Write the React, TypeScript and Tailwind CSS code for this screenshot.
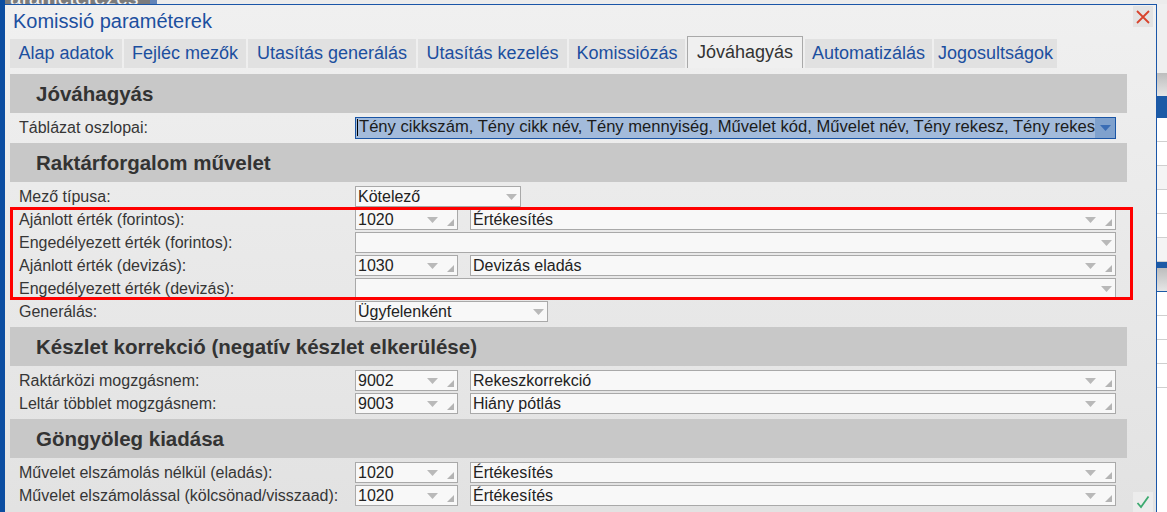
import React from "react";

const tabs = [
  { label: "Alap adatok", w: "w-[112px]" },
  { label: "Fejléc mezők", w: "w-[122px]" },
  { label: "Utasítás generálás", w: "w-[168px]" },
  { label: "Utasítás kezelés", w: "w-[149px]" },
  { label: "Komissiózás", w: "w-[116px]" },
  { label: "Jóváhagyás", w: "w-[116px]", active: true },
  { label: "Automatizálás", w: "w-[127px]" },
  { label: "Jogosultságok", w: "w-[123px]" },
];

function Arrow({ color = "#b9b9b9" }: { color?: string }) {
  return (
    <svg width="11" height="6" viewBox="0 0 11 6" className="shrink-0">
      <polygon points="0,0 11,0 5.5,6" fill={color} />
    </svg>
  );
}

function Corner() {
  return (
    <svg width="7" height="7" viewBox="0 0 7 7" className="shrink-0 self-end mb-[3px]">
      <polygon points="7,0 7,7 0,7" fill="#b4b4b4" />
    </svg>
  );
}

// text field with dropdown arrow (and resize corner for code/name pickers)
function Combo({ value, w, corner }: { value?: string; w: string; corner?: boolean }) {
  return (
    <div className={`${w} h-[21px] flex items-center bg-[#f8f8f8] border border-[#a9a9a9] pl-[2px] pr-[3px]`}>
      <span className="flex-1 overflow-hidden whitespace-nowrap text-[16px] leading-[19px] text-[#222]">{value}</span>
      <Arrow />
      {corner && (
        <>
          <span className="w-[9px]" />
          <Corner />
        </>
      )}
    </div>
  );
}

function CodePair({ code, name }: { code: string; name: string }) {
  return (
    <div className="flex gap-[12px]">
      <Combo value={code} w="w-[103px]" corner />
      <Combo value={name} w="w-[646px]" corner />
    </div>
  );
}

function Row({ label, children }: { label: string; children?: React.ReactNode }) {
  return (
    <div className="h-[23px] flex items-center">
      <div className="w-[345px] pl-[9px] text-[16px] text-[#363636] whitespace-nowrap">{label}</div>
      {children}
    </div>
  );
}

function Section({ title, children }: { title: string; children: React.ReactNode }) {
  return (
    <div>
      <div className="h-[39px] bg-[#c8c8c8] flex items-center pl-[26px] pt-[2px] text-[20.5px] font-bold text-[#333]">
        {title}
      </div>
      <div className="pt-[3px] pb-[4px]">{children}</div>
    </div>
  );
}

export default function App() {
  return (
    <div className="w-[1167px] h-[512px] overflow-hidden bg-[#e6e6e6] font-['Liberation_Sans',Arial,sans-serif]">
      {/* strip of the app behind the dialog */}
      <div className="h-[4px] flex">
        <div className="w-[5px] bg-[#0b4da1]" />
        <div className="w-[145px] bg-[#7b7b7b] overflow-hidden">
          <div className="-mt-[13px] pl-[5px] text-[21px] leading-none text-[#f2f2f2]">arameterezés</div>
        </div>
        <div className="w-[7px] bg-[#6384b8]" />
        <div className="flex-1 bg-[#ececec]" />
      </div>

      <div className="flex h-[508px]">
        <div className="w-[5px] bg-[#0b4da1]" />

        {/* dialog */}
        <div className="relative w-[1152px] flex flex-col border-t border-r border-[#1a56a8] bg-linear-to-b from-[#f0f0f0] to-[#e2e2e2]">
          <div className="h-[31px] flex justify-between">
            <div className="pl-[8px] self-center text-[20px] text-[#1c4f9f]">Komissió paraméterek</div>
            <button className="mt-[1px] mr-[3px] w-[20px] h-[21px] bg-[#e3e3e3] flex items-center justify-center">
              <svg width="14" height="14" viewBox="0 0 14 14">
                <path d="M1 1 L13 13 M13 1 L1 13" stroke="#d8432c" strokeWidth="1.8" />
              </svg>
            </button>
          </div>

          <div className="h-[32px] flex items-end gap-[2px] pl-[5px]">
            {tabs.map((t) =>
              t.active ? (
                <div
                  key={t.label}
                  className={`${t.w} h-[32px] flex items-center justify-center bg-[#f0f0f0] border border-b-0 border-[#a9a9a9] text-[18px] text-[#333]`}
                >
                  {t.label}
                </div>
              ) : (
                <div
                  key={t.label}
                  className={`${t.w} h-[29px] flex items-center justify-center bg-[#e1e1e1] text-[18px] text-[#1c4f9f]`}
                >
                  {t.label}
                </div>
              )
            )}
          </div>

          <div className="mt-[6px] ml-[5px] w-[1117px]">
            <Section title="Jóváhagyás">
              <Row label="Táblázat oszlopai:">
                <div className="w-[761px] h-[22px] flex items-stretch bg-[#a3bbdb] border border-[#1a55a5]">
                  <span className="flex-1 flex items-center overflow-hidden whitespace-nowrap text-[16.6px] text-[#1b1b1b] pl-[1px] pr-[5px]">
                    <span className="w-px h-[17px] bg-black mr-[1px] shrink-0" />
                    Tény cikkszám, Tény cikk név, Tény mennyiség, Művelet kód, Művelet név, Tény rekesz, Tény rekesz tároló
                  </span>
                  <span className="w-[20px] bg-[#7fa1cd] flex items-center justify-center">
                    <Arrow color="#3a6db5" />
                  </span>
                </div>
              </Row>
            </Section>

            <Section title="Raktárforgalom művelet">
              <Row label="Mező típusa:">
                <Combo value="Kötelező" w="w-[166px]" />
              </Row>
              <div className="relative">
                <Row label="Ajánlott érték (forintos):">
                  <CodePair code="1020" name="Értékesítés" />
                </Row>
                <Row label="Engedélyezett érték (forintos):">
                  <Combo w="w-[761px]" />
                </Row>
                <Row label="Ajánlott érték (devizás):">
                  <CodePair code="1030" name="Devizás eladás" />
                </Row>
                <Row label="Engedélyezett érték (devizás):">
                  <Combo w="w-[761px]" />
                </Row>
                <div className="absolute -top-[1px] bottom-0 left-0 -right-[6px] border-[3px] border-[#ff0000] pointer-events-none" />
              </div>
              <Row label="Generálás:">
                <Combo value="Ügyfelenként" w="w-[193px]" />
              </Row>
            </Section>

            <Section title="Készlet korrekció (negatív készlet elkerülése)">
              <Row label="Raktárközi mogzgásnem:">
                <CodePair code="9002" name="Rekeszkorrekció" />
              </Row>
              <Row label="Leltár többlet mogzgásnem:">
                <CodePair code="9003" name="Hiány pótlás" />
              </Row>
            </Section>

            <Section title="Göngyöleg kiadása">
              <Row label="Művelet elszámolás nélkül (eladás):">
                <CodePair code="1020" name="Értékesítés" />
              </Row>
              <Row label="Művelet elszámolással (kölcsönad/visszaad):">
                <CodePair code="1020" name="Értékesítés" />
              </Row>
            </Section>
          </div>

          <button className="absolute bottom-0 right-[3px] w-[20px] h-[20px] bg-[#ececec] flex items-center justify-center">
            <svg width="14" height="14" viewBox="0 0 14 14">
              <path d="M1.5 8 L5 12 L12.5 1.5" fill="none" stroke="#3daa70" strokeWidth="1.8" />
            </svg>
          </button>
        </div>

        {/* table of the app behind the dialog */}
        <div className="w-[10px] flex flex-col">
          <div className="h-[69px] bg-[#efefef]" />
          <div className="h-[23px] bg-linear-to-b from-[#bdbdbd] to-[#e6e6e6]" />
          <div className="h-[22px] bg-[#1c5aa6]" />
          <div className="h-[24px] bg-white border-b border-[#cfcfcf]" />
          <div className="h-[24px] bg-white border-b border-[#cfcfcf]" />
          <div className="h-[24px] bg-[#f4f4f4] border-b border-[#cfcfcf]" />
          <div className="h-[24px] bg-white border-b border-[#cfcfcf]" />
          <div className="h-[24px] bg-white border-b border-[#cfcfcf]" />
          <div className="h-[24px] bg-[#f4f4f4] border-b border-[#cfcfcf]" />
          <div className="h-[6px] bg-[#1c5aa6]" />
          <div className="h-[24px] bg-linear-to-b from-[#bdbdbd] to-[#e6e6e6] border-b border-[#1c5aa6]" />
          <div className="h-[24px] bg-white border-b border-[#cfcfcf]" />
          <div className="h-[24px] bg-white border-b border-[#cfcfcf]" />
          <div className="h-[24px] bg-white border-b border-[#cfcfcf]" />
          <div className="h-[24px] bg-white border-b border-[#cfcfcf]" />
          <div className="flex-1 bg-white" />
        </div>
      </div>
    </div>
  );
}
